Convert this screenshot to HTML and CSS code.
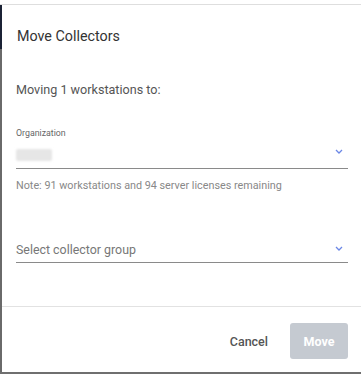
FILE: index.html
```html
<!DOCTYPE html>
<html>
<head>
<meta charset="utf-8">
<link rel="stylesheet" href="styles.css">
</head>
<body>
<div class="page">
  <div class="frame">
    <div class="backdrop"></div>
    <div class="dialog">
      <div class="dialog-header">
        <h1 class="dialog-title">Move Collectors</h1>
      </div>
      <div class="dialog-body">
        <p class="intro">Moving 1 workstations to:</p>
        <div class="field field-org">
          <label class="field-label">Organization</label>
          <div class="select">
            <span class="blurred"></span>
            <svg class="chevron" width="8" height="5" viewBox="0 0 8 5"><polyline points="1,1 4,4 7,1" fill="none" stroke="#6b87e6" stroke-width="1.3"/></svg>
          </div>
          <p class="note">Note: 91 workstations and 94 server licenses remaining</p>
        </div>
        <div class="field field-group">
          <div class="select">
            <span class="placeholder">Select collector group</span>
            <svg class="chevron" width="8" height="5" viewBox="0 0 8 5"><polyline points="1,1 4,4 7,1" fill="none" stroke="#6b87e6" stroke-width="1.3"/></svg>
          </div>
        </div>
      </div>
      <div class="dialog-footer">
        <button class="btn btn-cancel">Cancel</button>
        <button class="btn btn-move" disabled>Move</button>
      </div>
    </div>
  </div>
</div>
</body>
</html>
```
FILE: styles.css
```css
* { box-sizing: border-box; }
html, body { margin: 0; padding: 0; background: #fff; }
body { font-family: Roboto, "Noto Sans", Arial, sans-serif; width: 361px; height: 375px; overflow: hidden; }

.page { padding-top: 4px; height: 375px; }
.frame {
  display: flex;
  height: 370px;
  border-top: 1px solid #dedede;
  border-bottom: 2px solid #6f6f6f;
}
.backdrop {
  width: 2px;
  flex: none;
  background: linear-gradient(to bottom, #1b2235 0, #1b2235 44px, #6a6a6a 44px, #6a6a6a 100%);
}
.dialog {
  flex: 1;
  display: flex;
  flex-direction: column;
  background: #fff;
}
.dialog-header { padding: 22px 15px 0 15px; height: 62px; }
.dialog-title {
  margin: 0;
  font-size: 14.3px;
  font-weight: 400;
  color: #333;
  line-height: 18px;
}
.dialog-body { padding: 0 13px 0 14px; flex: 1; }
.intro { margin: 15px 0 0 0; font-size: 12.6px; color: #555; line-height: 16px; }
.field-org { margin-top: 29px; }
.field-label { display: block; font-size: 8.8px; color: #666; line-height: 12px; }
.select {
  display: flex;
  align-items: center;
  justify-content: space-between;
  border-bottom: 1px solid #8a8a8a;
  height: 26px;
  padding-right: 5px;
}
.field-org .select { height: 30px; }
.blurred {
  display: block;
  width: 36px;
  height: 12px;
  margin-top: 3px;
  background: #e6e6e6;
  filter: blur(1.2px);
  border-radius: 2px;
}
.field-org .chevron { margin-top: -4px; }
.placeholder { font-size: 12.4px; color: #777; }
.chevron { display: block; }
.note { margin: 10px 0 0 0; font-size: 10.8px; color: #888; line-height: 13px; }
.field-group { margin-top: 45px; }
.field-group .chevron { margin-top: -3px; }

.dialog-footer {
  height: 66px;
  border-top: 1px solid #e2e2e2;
  display: flex;
  align-items: center;
  justify-content: flex-end;
  padding: 3px 13px 0 0;
  gap: 22px;
}
.btn {
  font-family: inherit;
  font-size: 12.5px;
  font-weight: 500;
  border: none;
  background: none;
  cursor: pointer;
}
.btn-cancel { color: #555; padding: 0; }
.btn-move {
  background: #c5cad1;
  color: #fff;
  width: 58px;
  height: 36px;
  border-radius: 3px;
  font-weight: 700;
}
```
